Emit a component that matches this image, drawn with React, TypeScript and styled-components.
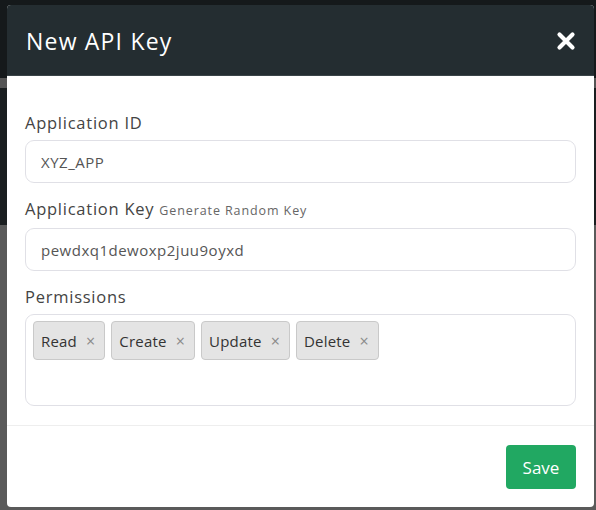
import React, { useState } from "react";
import styled, { createGlobalStyle } from "styled-components";

const GlobalStyle = createGlobalStyle`
  html, body {
    margin: 0;
    padding: 0;
  }
  body {
    background: linear-gradient(
      to bottom,
      #15191b 0,
      #15191b 78px,
      #555555 78px,
      #555555 88px,
      #1a1e20 88px,
      #1a1e20 225px,
      #5a5a5a 225px,
      #5a5a5a 100%
    );
    min-height: 510px;
    font-family: "Open Sans", "Liberation Sans", sans-serif;
  }
`;

const Backdrop = styled.div`
  box-sizing: border-box;
  width: 596px;
  height: 510px;
  padding: 5px 2px 3px 7px;
`;

const Modal = styled.div`
  display: flex;
  flex-direction: column;
  height: 100%;
  background-color: #ffffff;
  border-radius: 4px;
  overflow: hidden;
`;

const Header = styled.div`
  display: flex;
  align-items: center;
  justify-content: space-between;
  height: 74px;
  box-sizing: border-box;
  padding: 2px 17px 0 19px;
  background-color: #242d31;
  border-bottom: 1px solid #3a4448;
`;

const Title = styled.h2`
  margin: 0;
  font-family: "Open Sans", sans-serif;
  font-weight: 400;
  font-size: 23px;
  color: #ffffff;
  letter-spacing: 1.2px;
`;

const CloseButton = styled.button`
  display: flex;
  align-items: center;
  justify-content: center;
  width: 22px;
  height: 22px;
  padding: 0;
  border: none;
  background: none;
  cursor: pointer;
`;

const Body = styled.div`
  display: flex;
  flex-direction: column;
  padding: 35px 18px 19px 18px;
  border-bottom: 1px solid #eeeeee;
`;

const Field = styled.div`
  display: flex;
  flex-direction: column;
  gap: 5px;
  margin-bottom: 14px;

  &:last-child {
    margin-bottom: 0;
  }
`;

const Label = styled.label`
  font-family: "Open Sans", sans-serif;
  font-size: 16.5px;
  line-height: 24px;
  letter-spacing: 0.75px;
  color: #444444;
`;

const Hint = styled.span`
  font-size: 12.5px;
  letter-spacing: 0.9px;
  color: #666666;
`;

const Input = styled.input`
  box-sizing: border-box;
  height: 43px;
  width: 100%;
  padding: 0 15px;
  border: 1px solid #e0e0e6;
  border-radius: 9px;
  font-family: "Open Sans", sans-serif;
  font-size: 15px;
  letter-spacing: 0.5px;
  color: #555555;
  outline: none;
`;

const TagBox = styled.div`
  box-sizing: border-box;
  height: 92px;
  display: flex;
  flex-wrap: wrap;
  align-content: flex-start;
  gap: 6px;
  padding: 6px 7px;
  border: 1px solid #e0e0e6;
  border-radius: 9px;
`;

const Tag = styled.span`
  box-sizing: border-box;
  display: flex;
  align-items: center;
  gap: 9px;
  height: 39px;
  padding: 0 9px 0 7px;
  background-color: #e4e4e4;
  border: 1px solid #c9c9c9;
  border-radius: 4px;
  font-family: "Open Sans", sans-serif;
  font-size: 15px;
  letter-spacing: 0.2px;
  color: #333333;
`;

const TagRemove = styled.span`
  font-size: 16px;
  color: #8a8a8a;
  cursor: pointer;
`;

const Footer = styled.div`
  display: flex;
  justify-content: flex-end;
  padding: 19px 18px 18px 18px;
`;

const SaveButton = styled.button`
  width: 70px;
  height: 44px;
  border: none;
  border-radius: 4px;
  background-color: #21a862;
  color: #ffffff;
  font-family: "Open Sans", sans-serif;
  font-size: 17px;
  cursor: pointer;
`;

const permissions = ["Read", "Create", "Update", "Delete"];

export default function App() {
  const [tags, setTags] = useState<string[]>(permissions);

  return (
    <>
      <GlobalStyle />
      <Backdrop>
        <Modal>
          <Header>
            <Title>New API Key</Title>
            <CloseButton aria-label="Close">
              <svg width="20" height="20" viewBox="0 0 20 20">
                <path d="M3.5 3.5 L16.5 16.5 M16.5 3.5 L3.5 16.5" stroke="#ffffff" strokeWidth="4.2" strokeLinecap="round" />
              </svg>
            </CloseButton>
          </Header>
          <Body>
            <Field>
              <Label>Application ID</Label>
              <Input defaultValue="XYZ_APP" />
            </Field>
            <Field>
              <Label>
                Application Key <Hint>Generate Random Key</Hint>
              </Label>
              <Input defaultValue="pewdxq1dewoxp2juu9oyxd" />
            </Field>
            <Field>
              <Label>Permissions</Label>
              <TagBox>
                {tags.map((t) => (
                  <Tag key={t}>
                    {t}
                    <TagRemove onClick={() => setTags(tags.filter((x) => x !== t))}>×</TagRemove>
                  </Tag>
                ))}
              </TagBox>
            </Field>
          </Body>
          <Footer>
            <SaveButton>Save</SaveButton>
          </Footer>
        </Modal>
      </Backdrop>
    </>
  );
}
